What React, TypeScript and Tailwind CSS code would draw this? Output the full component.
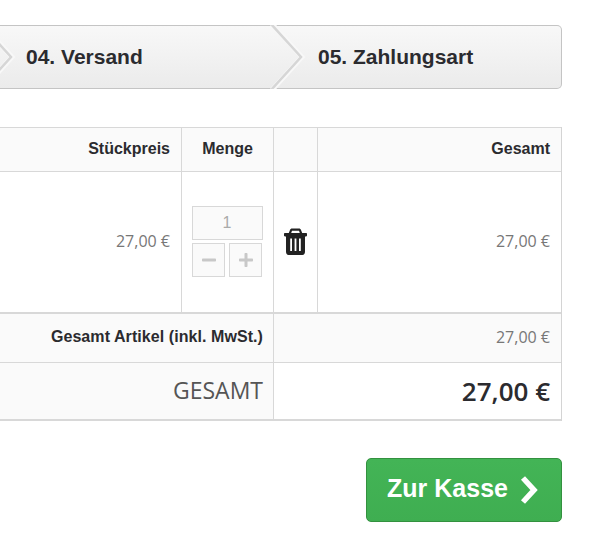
import React from 'react';
import { FaMinus, FaPlus } from 'react-icons/fa';

const Chevron: React.FC<{ className: string }> = ({ className }) => (
  <svg className={className} width="36" height="64" viewBox="0 0 36 64" fill="none">
    <polyline points="2,-1 32,32 2,65" stroke="#f8f8f8" strokeWidth="5" />
    <polyline points="1,-1 31,32 1,65" stroke="#d6d6d6" strokeWidth="2.5" />
  </svg>
);

const TrashIcon: React.FC = () => (
  <svg width="23" height="27" viewBox="0 0 23 27" fill="#222222">
    <path fillRule="evenodd" d="M8 0.5H15C16 0.5 16.6 1 17 2L18.2 5H22C22.6 5 23 5.4 23 6V7.5C23 8 22.6 8.4 22 8.4H21V23.5C21 25.5 20 27 18.5 27H4.5C3 27 2 25.5 2 23.5V8.4H1C0.4 8.4 0 8 0 7.5V6C0 5.4 0.4 5 1 5H4.8L6 2C6.4 1 7 0.5 8 0.5ZM8 2.8L7.2 5H15.8L15 2.8ZM6.2 10.5V23H8V10.5ZM10.6 10.5V23H12.4V10.5ZM15 10.5V23H16.8V10.5Z" />
  </svg>
);

const App: React.FC = () => {
  return (
    <div className="h-[536px] w-[604px] overflow-hidden bg-white pr-[42px] pt-[25px] font-['Liberation_Sans',sans-serif] text-[#2b2b2f]">
      {/* Steps */}
      <div className="relative flex h-16 items-center rounded-r-[5px] border-y border-r border-y-[#c4c4c4] border-r-[#c4c4c4] bg-gradient-to-b from-[#f8f8f8] to-[#ebebeb] text-[21px] font-bold">
        <Chevron className="absolute left-[-20px] top-[-1px]" />
        <Chevron className="absolute left-[270px] top-[-1px]" />
        <span className="ml-[26px] w-[292px]">04. Versand</span>
        <span>05. Zahlungsart</span>
      </div>

      {/* Cart table */}
      <div className="mt-[38px] border-r border-[#d4d4d4] text-base">
        <div className="flex h-[45px] border-y border-[#d8d8d8] bg-[#fafafa] font-bold">
          <div className="flex w-[182px] items-center justify-end border-r border-[#d8d8d8] pb-[2px] pr-[11px]">Stückpreis</div>
          <div className="flex w-[92px] items-center justify-center border-r border-[#d8d8d8] pb-[2px]">Menge</div>
          <div className="w-[44px] border-r border-[#d8d8d8]" />
          <div className="flex flex-1 items-center justify-end pb-[2px] pr-[11px]">Gesamt</div>
        </div>

        <div className="flex h-[140px] font-['Open_Sans',sans-serif] text-[#777]">
          <div className="flex w-[182px] items-center justify-end border-r border-[#d8d8d8] pb-[2px] pr-[11px]">27,00 €</div>
          <div className="flex w-[92px] flex-col items-center justify-center gap-[3px] border-r border-[#d8d8d8] pb-[2px] pr-[1px]">
            <div className="flex h-[34px] w-[71px] items-center justify-center border border-[#d8d8d8] bg-[#fafafa] font-['Liberation_Sans',sans-serif] text-[#aaa]">1</div>
            <div className="flex gap-[4px]">
              <div className="flex h-[34px] w-[33px] items-center justify-center border border-[#d8d8d8] bg-[#fafafa] text-[#c8c8c8]">
                <FaMinus size={16} />
              </div>
              <div className="flex h-[34px] w-[33px] items-center justify-center border border-[#d8d8d8] bg-[#fafafa] text-[#c8c8c8]">
                <FaPlus size={16} />
              </div>
            </div>
          </div>
          <div className="flex w-[44px] items-center justify-center border-r border-[#d8d8d8] pb-[2px]">
            <TrashIcon />
          </div>
          <div className="flex flex-1 items-center justify-end pb-[2px] pr-[11px]">27,00 €</div>
        </div>

        <div className="flex h-[50px] border-t-2 border-[#d8d8d8] bg-[#fafafa]">
          <div className="flex w-[274px] items-center justify-end border-r border-[#d8d8d8] pb-[2px] pr-[10px] font-bold tracking-[0.07px]">Gesamt Artikel (inkl. MwSt.)</div>
          <div className="flex flex-1 items-center justify-end pb-[2px] pr-[11px] font-['Open_Sans',sans-serif] text-[#777]">27,00 €</div>
        </div>

        <div className="flex h-[59px] border-t border-b-2 border-[#d8d8d8] font-['Open_Sans',sans-serif]">
          <div className="flex w-[274px] items-center justify-end border-r border-[#d8d8d8] bg-[#fafafa] pb-[2px] pr-[10px] text-[23px] font-medium text-[#555]">GESAMT</div>
          <div className="flex flex-1 items-center justify-end pr-[11px] text-[26px] font-semibold">27,00 €</div>
        </div>
      </div>

      {/* Checkout */}
      <div className="mt-[37px] flex justify-end">
        <button className="flex h-16 w-[196px] items-center justify-center gap-[11px] rounded-[5px] border border-[#33913f] bg-gradient-to-b from-[#43b456] to-[#3fae51] pb-[2px] pr-[2px] text-[25px] font-bold text-white">
          Zur Kasse
          <svg width="20" height="30" viewBox="0 0 20 30" fill="none" className="mt-[2px]">
            <polyline points="4,3 15,15 4,27" stroke="#ffffff" strokeWidth="5.5" />
          </svg>
        </button>
      </div>
    </div>
  );
};

export default App;
